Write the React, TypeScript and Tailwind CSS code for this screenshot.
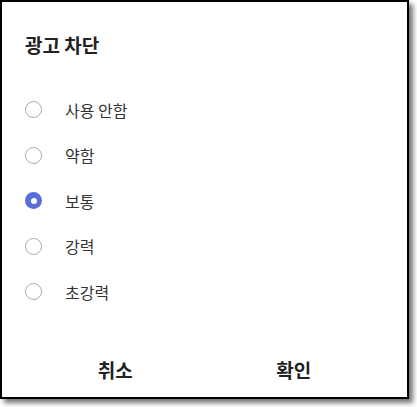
import React, { useState } from "react";

const options = ["사용 안함", "약함", "보통", "강력", "초강력"];

const App: React.FC = () => {
  const [selected, setSelected] = useState<number>(2);

  return (
    <div className="w-[417px] h-[407px] bg-white font-['Noto_Sans_CJK_KR','Noto_Sans',sans-serif]">
      <div className="w-[409px] h-[399px] border-2 border-black bg-white shadow-[4px_4px_5px_rgba(0,0,0,0.55)] flex flex-col">
        <h1 className="pt-[27px] pl-[23px] text-[19px] leading-[32px] font-bold text-[#222]">
          광고 차단
        </h1>
        <ul className="mt-[26px] flex flex-col">
          {options.map((label, i) => (
            <li
              key={label}
              onClick={() => setSelected(i)}
              className="h-[45.5px] flex items-center pl-[23px] cursor-pointer"
            >
              {selected === i ? (
                <span className="w-[17px] h-[17px] rounded-full bg-[#5a6ed8] flex items-center justify-center">
                  <span className="w-[6px] h-[6px] rounded-full bg-white" />
                </span>
              ) : (
                <span className="w-[17px] h-[17px] rounded-full border-[1.5px] border-[#a8a8a8]" />
              )}
              <span className="ml-[23px] text-[16px] text-[#333]">{label}</span>
            </li>
          ))}
        </ul>
        <div className="mt-auto mb-[3px] px-[24px] grid grid-cols-2 h-[48px]">
          <button className="text-[19px] font-bold text-[#222]">취소</button>
          <button className="text-[19px] font-bold text-[#222]">확인</button>
        </div>
      </div>
    </div>
  );
};

export default App;
